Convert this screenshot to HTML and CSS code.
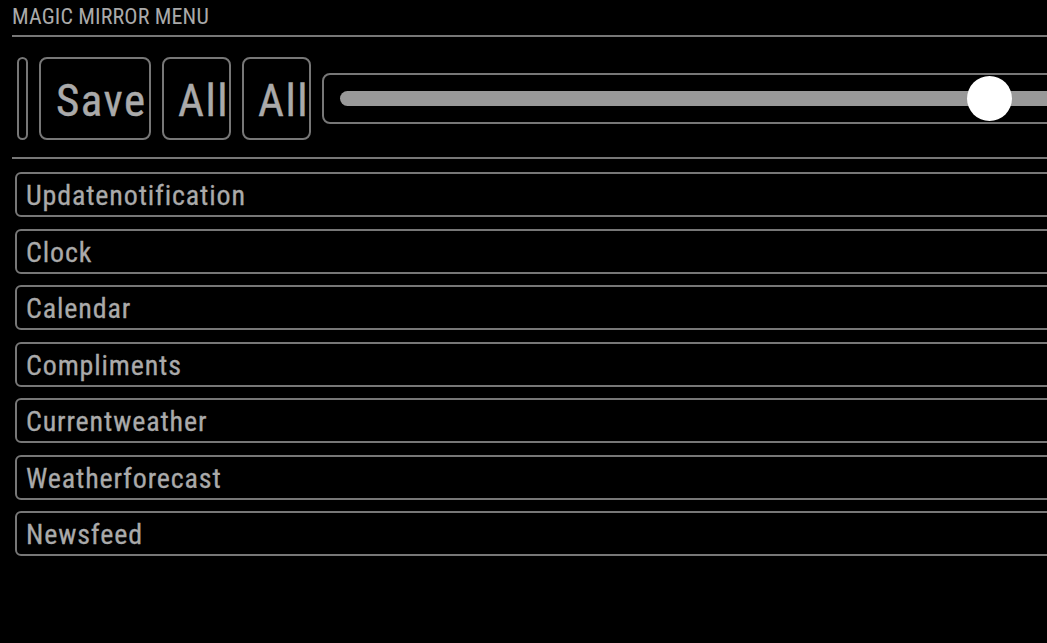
FILE: index.html
```html
<!DOCTYPE html>
<html lang="en">
<head>
<meta charset="utf-8">
<title>Magic Mirror Menu</title>
<link rel="stylesheet" href="styles.css">
</head>
<body>
<div class="menu">
  <div class="title">MAGIC MIRROR MENU</div>
  <div class="toolbar">
    <div class="handle"></div>
    <div class="btn btn-save">Save</div>
    <div class="btn btn-all">All</div>
    <div class="btn btn-all">All</div>
    <div class="slider">
      <div class="track">
        <div class="thumb" style="left: 627px"></div>
      </div>
    </div>
  </div>
  <div class="modules">
    <div class="module">Updatenotification</div>
    <div class="module">Clock</div>
    <div class="module">Calendar</div>
    <div class="module">Compliments</div>
    <div class="module">Currentweather</div>
    <div class="module">Weatherforecast</div>
    <div class="module">Newsfeed</div>
  </div>
</div>
</body>
</html>
```
FILE: styles.css
```css
html, body {
  margin: 0;
  padding: 0;
  background: #000;
  overflow: hidden;
}
body {
  width: 1047px;
  height: 643px;
  font-family: "Roboto Condensed", "Liberation Sans Narrow", Roboto, sans-serif;
  color: #aaa;
}
.menu {
  width: 1300px;
  padding: 6px 0 0 12px;
}
.title {
  font-size: 22px;
  line-height: 22px;
  letter-spacing: 0.15px;
  padding-bottom: 7px;
  border-bottom: 2px solid #777;
}
.toolbar {
  display: flex;
  align-items: center;
  gap: 11px;
  padding: 20px 0 17px 5px;
  border-bottom: 2px solid #777;
}
.handle {
  box-sizing: border-box;
  width: 11px;
  height: 83px;
  border: 2px solid #777;
  border-radius: 6px;
}
.btn {
  box-sizing: border-box;
  height: 83px;
  border: 2px solid #777;
  border-radius: 8px;
  font-size: 45px;
  letter-spacing: 1.5px;
  line-height: 80px;
  padding: 2px 0 0 15px;
  white-space: nowrap;
  -webkit-text-stroke: 0.4px #aaa;
}
.btn-save { width: 112px; }
.btn-all { width: 69px; padding-left: 14px; }
.slider {
  box-sizing: border-box;
  width: 880px;
  height: 51px;
  border: 2px solid #777;
  border-radius: 8px;
  display: flex;
  align-items: center;
  padding: 0 16px;
}
.track {
  position: relative;
  flex: 1;
  height: 15px;
  border-radius: 8px;
  background: #999;
}
.thumb {
  position: absolute;
  top: -15px;
  width: 45px;
  height: 45px;
  border-radius: 50%;
  background: #fff;
}
.modules {
  display: flex;
  flex-direction: column;
  gap: 11.5px;
  padding: 13px 0 0 3px;
}
.module {
  box-sizing: border-box;
  width: 1200px;
  height: 45px;
  border: 2px solid #777;
  border-radius: 6px;
  font-size: 28px;
  letter-spacing: 0.85px;
  line-height: 42px;
  padding: 1px 0 0 9px;
  -webkit-text-stroke: 0.3px #aaa;
}
```
